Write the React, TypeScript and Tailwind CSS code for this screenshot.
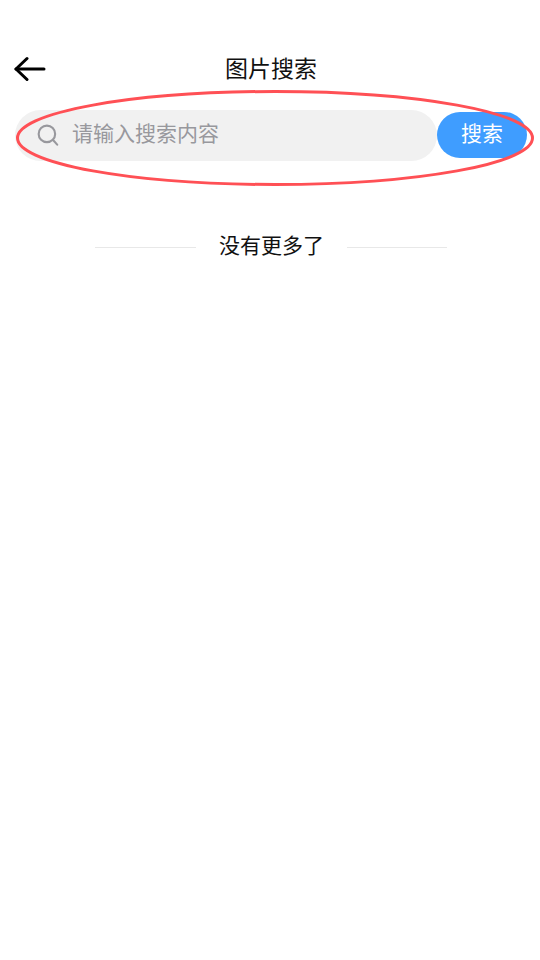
export default function App() {
  const font = { fontFamily: '"Noto Sans CJK SC", sans-serif' };
  return (
    <div className="relative flex h-[960px] w-[540px] flex-col bg-white" style={font}>
      <header className="relative mt-[47px] flex h-[44px] items-center justify-center">
        <svg className="absolute left-[14px] top-[9px]" width="32" height="26" viewBox="0 0 32 26" fill="none" stroke="#000" strokeWidth="3" strokeLinecap="round" strokeLinejoin="round">
          <path d="M2 13H30" />
          <path d="M13 2.5L2 13L13 23.5" />
        </svg>
        <h1 className="pb-[4px] pl-[3px] pr-[1px] text-[23px] font-normal leading-[30px] text-[#111]">图片搜索</h1>
      </header>
      <div className="mt-[19px] flex items-start pl-[15px]">
        <div className="flex h-[51px] w-[422px] items-center rounded-[26px] bg-[#f1f1f1] pl-[22px]">
          <svg className="mb-[2px]" width="22" height="22" viewBox="0 0 24 24" fill="none" stroke="#98989d" strokeWidth="2.3" strokeLinecap="round">
            <circle cx="10.8" cy="10.8" r="9" />
            <path d="M17.5 17.5L22 22.5" />
          </svg>
          <span className="ml-[13px] pb-[8px] text-[21px] leading-[28px] text-[#98989d]">请输入搜索内容</span>
        </div>
        <button className="mt-[2px] flex h-[46px] w-[90px] items-center justify-center rounded-[23px] bg-[#3f9dff] pb-[4px] text-[21px] text-white">搜索</button>
      </div>
      <div className="mt-[69px] flex items-center pl-[95px]">
        <div className="h-px w-[101px] bg-[#e8e8e8]" />
        <span className="mx-[23px] pb-[6px] text-[21px] leading-[28px] text-[#111]">没有更多了</span>
        <div className="h-px w-[100px] bg-[#e8e8e8]" />
      </div>
      <svg className="pointer-events-none absolute left-[14px] top-[88px]" width="522" height="100" viewBox="0 0 522 100" fill="none">
        <ellipse cx="261" cy="50" rx="257.5" ry="46.5" stroke="#ff5055" strokeWidth="3" />
      </svg>
    </div>
  );
}
